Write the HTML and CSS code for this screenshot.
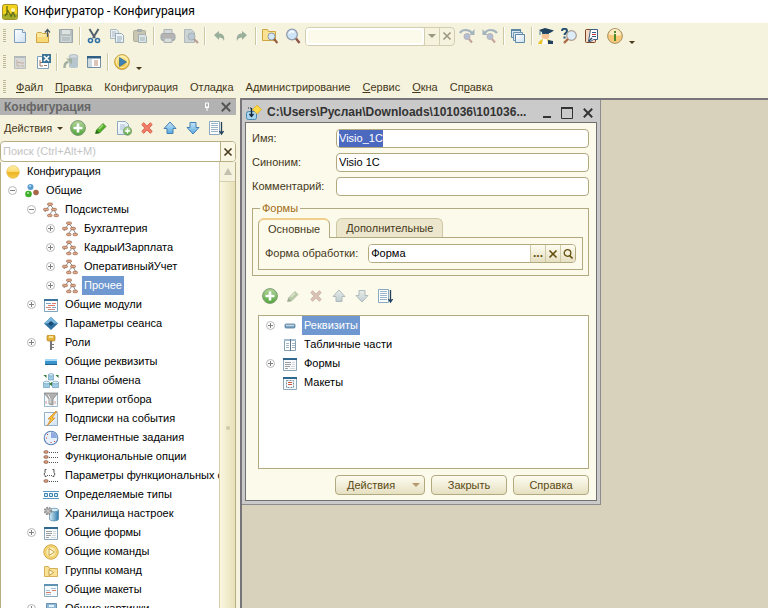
FILE: index.html
```html
<!DOCTYPE html>
<html lang="ru">
<head>
    <meta charset="UTF-8">
    <meta name="viewport" content="width=device-width, initial-scale=1.0">
    <title>Конфигуратор - Конфигурация</title>
    <link rel="stylesheet" href="styles.css">
</head>
<body>
    <!-- icon set -->
    <svg class="sprite" width="0" height="0" aria-hidden="true">
        <defs>
            <linearGradient id="gGreen" x1="0" y1="0" x2="0" y2="1"><stop offset="0" stop-color="#b4d69c"/><stop offset="1" stop-color="#4fa53a"/></linearGradient>
            <linearGradient id="gGold" x1="0" y1="0" x2="0" y2="1"><stop offset="0" stop-color="#fff3a8"/><stop offset="1" stop-color="#e8b42c"/></linearGradient>
            <linearGradient id="gBall" x1="0" y1="0" x2="0" y2="1"><stop offset="0" stop-color="#fdf0a8"/><stop offset=".45" stop-color="#fbdc70"/><stop offset=".55" stop-color="#eeb222"/><stop offset="1" stop-color="#f7cf4c"/></linearGradient>
            <linearGradient id="gBlue" x1="0" y1="0" x2="0" y2="1"><stop offset="0" stop-color="#c6e6f8"/><stop offset="1" stop-color="#5aa9de"/></linearGradient>
            <linearGradient id="gPage" x1="0" y1="0" x2="1" y2="1"><stop offset="0" stop-color="#ffffff"/><stop offset="1" stop-color="#cfe0ef"/></linearGradient>
            <linearGradient id="gCyl" x1="0" y1="0" x2="1" y2="0"><stop offset="0" stop-color="#d9effa"/><stop offset="1" stop-color="#2d79a8"/></linearGradient>
        </defs>
        <symbol id="i-app" viewBox="0 0 16 16"><rect x=".5" y=".5" width="15" height="15" rx="2" fill="#f3d21d" stroke="#a3912c"/><path d="M1 10h14v3a2 2 0 0 1-2 2H3a2 2 0 0 1-2-2z" fill="#a3ad2a"/><path d="M5 2v9M3 12l3-5 3 5M9 13l2-6 2 6" fill="none" stroke="#5f6d18" stroke-width="1.300"/><circle cx="11" cy="6" r="2" fill="#fff6b0"/></symbol>
        <symbol id="i-new" viewBox="0 0 16 16"><path d="M2.500 1.500h8l3 3v10h-11z" fill="url(#gPage)" stroke="#7d9fbd"/><path d="M10.500 1.500v3h3" fill="#fff" stroke="#7d9fbd"/></symbol>
        <symbol id="i-open" viewBox="0 0 16 16"><path d="M1.500 14.500v-9l1-1h4l1 1h6v9z" fill="#fbe79e" stroke="#d0a545"/><path d="M2 9h11v5H2z" fill="#f8d877"/><path d="M12.500 9V2M10 4.500 12.500 1.500 15 4.500" fill="none" stroke="#4d5a60" stroke-width="1.300"/></symbol>
        <symbol id="i-save" viewBox="0 0 16 16"><path d="M1.500 1.500h13v13h-13z" fill="#b6c0c2" stroke="#9ca7ab"/><path d="M4 2h8v4H4z" fill="#dde2df"/><path d="M3 8h10v6H3z" fill="#d0d7d5"/><path d="M4 10h8M4 12h8" stroke="#a4afb2"/></symbol>
        <symbol id="i-cut" viewBox="0 0 16 16"><path d="M3.500 1l5.500 9M12.500 1L7 10" stroke="#52616d" stroke-width="2" fill="none"/><circle cx="4.500" cy="12.500" r="2" fill="none" stroke="#2e6fa8" stroke-width="1.600"/><circle cx="11.500" cy="12.500" r="2" fill="none" stroke="#2e6fa8" stroke-width="1.600"/></symbol>
        <symbol id="i-copy" viewBox="0 0 16 16"><path d="M1.500 1.500h6l2 2v7h-8z" fill="#e9eff0" stroke="#a9bac4"/><path d="M3 4h4M3 6h4M3 8h3" stroke="#a9bac4"/><path d="M6.500 5.500h6l2 2v7h-8z" fill="#eef4f6" stroke="#95abbb"/><path d="M8 9h5M8 11h5M8 13h4" stroke="#95abbb"/></symbol>
        <symbol id="i-paste" viewBox="0 0 16 16"><rect x="1.500" y="2.500" width="12" height="11" rx="1" fill="#c9c5b0" stroke="#b0ad9a"/><rect x="5" y="1" width="5" height="3" fill="#a5acaa"/><path d="M6.500 6.500h6l2 2v6h-8z" fill="#dfe6e6" stroke="#a2b0b6"/><path d="M8 10h5M8 12h5" stroke="#a2b0b6"/></symbol>
        <symbol id="i-print" viewBox="0 0 16 16"><path d="M4 1.500h8V6H4z" fill="#d5dad9" stroke="#a7b0b2"/><rect x="1" y="5.500" width="14" height="7" rx="2" fill="#b1b7b9" stroke="#a0a7a9"/><path d="M4 10h8v4.500H4z" fill="#d8dcda" stroke="#a7b0b2"/><path d="M3 8h10" stroke="#c9aaa6"/></symbol>
        <symbol id="i-preview" viewBox="0 0 16 16"><path d="M1.500 1.500h7l3 3v10h-10z" fill="#ccd3d3" stroke="#b0b9bb"/><circle cx="8.500" cy="8.500" r="3.500" fill="#b9c8d2" stroke="#a5b0b5"/><path d="M11 11l4 4" stroke="#b59d96" stroke-width="2.200"/></symbol>
        <symbol id="i-undo" viewBox="0 0 16 16"><path d="M3 7l5-4v2.500c4 0 6 2.500 5 7.500-1-3-2.500-3.500-5-3.500V12z" fill="#9aaf9c"/></symbol>
        <symbol id="i-redo" viewBox="0 0 16 16"><path d="M13 7L8 3v2.500C4 5.500 2 8 3 13c1-3 2.500-3.500 5-3.500V12z" fill="#9aaf9c"/></symbol>
        <symbol id="i-findfiles" viewBox="0 0 16 16"><path d="M.5 12.500v-11h5l1 2h7v9z" fill="#fae293" stroke="#cfa542"/><circle cx="9.500" cy="8.500" r="3.500" fill="#d3e8f8" stroke="#8b9aa8"/><path d="M12 11l3.500 4" stroke="#94583c" stroke-width="2"/></symbol>
        <symbol id="i-find" viewBox="0 0 16 16"><circle cx="7" cy="6.500" r="5.300" fill="#cfe4f7" stroke="#909dac" stroke-width="1.300"/><path d="M4 5.500a3 3 0 0 1 5-1" fill="none" stroke="#fff" stroke-width="1.400"/><path d="M11 10.500l3.500 4.500" stroke="#8f5546" stroke-width="2.400"/></symbol>
        <symbol id="i-findnext" viewBox="0 0 16 16"><path d="M1 5c2-4 9-4 12 0" fill="none" stroke="#a3b4bd" stroke-width="2.200"/><path d="M15.500 1v6h-5z" fill="#a3b4bd"/><circle cx="8" cy="8.500" r="3" fill="#b5bdd0" stroke="#b5b5bf"/><path d="M10 11l3 3.500" stroke="#c2a293" stroke-width="2"/></symbol>
        <symbol id="i-findprev" viewBox="0 0 16 16"><path d="M15 5C12 1 5 1 3 5" fill="none" stroke="#a3b4bd" stroke-width="2.200"/><path d="M.5 1v6h5z" fill="#a3b4bd"/><circle cx="8" cy="8.500" r="3" fill="#b5bdd0" stroke="#b5b5bf"/><path d="M10 11l3 3.500" stroke="#c2a293" stroke-width="2"/></symbol>
        <symbol id="i-windows" viewBox="0 0 16 16"><path d="M1.500 1.500h9v8h-9z" fill="#dce8f1" stroke="#5c87a5"/><path d="M1 1h10v2H1z" fill="#5c87a5"/><path d="M3.500 4.500h9v8h-9z" fill="#dce8f1" stroke="#6f97b2"/><path d="M5.500 6.500h9v8h-9z" fill="url(#gPage)" stroke="#5d88a6"/></symbol>
        <symbol id="i-student" viewBox="0 0 16 16"><path d="M0 16c1-3 3-5 7-5s7 2 8 5z" fill="#e8c52a"/><path d="M10 12l5 1v3h-5z" fill="#20425e"/><path d="M5 11l-1 5h6l-1-5z" fill="#fff"/><circle cx="7.500" cy="7.500" r="3.800" fill="#f5c396"/><path d="M4 4h7v2H4z" fill="#2c5878"/><path d="M1 2l6-2 9 2.500-4 2.500H5z" fill="#20425e"/><path d="M2 3v4" stroke="#4b8198"/></symbol>
        <symbol id="i-helpfind" viewBox="0 0 16 16"><path d="M1 3c0-3 5-3 5 0 0 2-2.500 2-2.500 4" fill="none" stroke="#26506f" stroke-width="2"/><path d="M2.500 8.500h2v2h-2z" fill="#26506f"/><circle cx="10.500" cy="7.500" r="4.800" fill="#dcecf8" stroke="#ab9a90" stroke-width="1.200"/><path d="M7 11l-4 4" stroke="#a96b48" stroke-width="2.400"/></symbol>
        <symbol id="i-syntax" viewBox="0 0 16 16"><rect x="1.500" y="1.500" width="10" height="13" rx="1" fill="#f6d9c4" stroke="#7a4526"/><path d="M6.500 1.500h7v10h-4l-3 2H4.500z" fill="#fff" stroke="#3a5d80"/><path d="M8 4.500h4M8 8.500h4" stroke="#345f88"/><path d="M8 6.500h4" stroke="#c33"/><path d="M5 13l3-3" stroke="#244b70" stroke-width="1.500"/></symbol>
        <symbol id="i-info" viewBox="0 0 16 16"><circle cx="8" cy="8" r="7.400" fill="#f7c877" stroke="#a5926a"/><path d="M2 7a6 6 0 0 1 12 0c-4 2-8-1-12 0z" fill="#fdebc6"/><path d="M7 3h2v2H7zM7 6h2v7H7z" fill="#4c8a2a"/></symbol>
        <symbol id="i-conf" viewBox="0 0 16 16"><path d="M2.500 2.500h11v12h-11z" fill="#d6d9d5" stroke="#b7bebc"/><path d="M2 2h12v2H2z" fill="#b1babb"/><path d="M5 6v6h3M5 8.500h3M8 9h4M9 12h3" fill="none" stroke="#c9aea3"/></symbol>
        <symbol id="i-confclose" viewBox="0 0 16 16"><path d="M2.500 2.500h11v12h-11z" fill="#fff" stroke="#7da0bb"/><path d="M5 6v6h3M5 8.500h2M9 11.500h3" fill="none" stroke="#9c7563"/><path d="M7 0h9v9H7z" fill="#3b7396"/><path d="M9 2l5 5M14 2L9 7" stroke="#fff" stroke-width="1.600"/></symbol>
        <symbol id="i-dbupd" viewBox="0 0 16 16"><path d="M6 2.500v10c0 2 9 2 9 0v-10z" fill="#b7c5cd"/><ellipse cx="10.500" cy="2.500" rx="4.500" ry="2" fill="#ced8dd" stroke="#b0bdc5"/><path d="M1.500 14c0-4 1-6 4-6" fill="none" stroke="#a3b1a0" stroke-width="2.400"/><path d="M3 4.500h6v6z" fill="#a3b1a0"/></symbol>
        <symbol id="i-panes" viewBox="0 0 16 16"><path d="M1.500 2.500h13v11h-13z" fill="#fff" stroke="#6f8da2"/><path d="M1 2h14v2.500H1z" fill="#2f5f82"/><path d="M2 5h4v8H2z" fill="#cdd9e0"/><path d="M8 7h4M8 9h4M8 11h4" stroke="#b98a72"/></symbol>
        <symbol id="i-run" viewBox="0 0 16 16"><circle cx="8" cy="8" r="7.400" fill="url(#gGold)" stroke="#c39d3d"/><circle cx="8" cy="8" r="5.500" fill="none" stroke="#fff2b6"/><path d="M5.500 3.500l7 4.500-7 4.500z" fill="#3d83b5" stroke="#225f8f" stroke-width=".6"/></symbol>
        <symbol id="i-add" viewBox="0 0 16 16"><circle cx="8" cy="8" r="7.400" fill="url(#gGreen)" stroke="#7c9a70"/><path d="M8 3.500v9M3.500 8h9" stroke="#fff" stroke-width="2.600"/></symbol>
        <symbol id="i-edit" viewBox="0 0 16 16"><path d="M2.500 13.500l1-3.500 6.500-6.500 3 3L6.500 13z" fill="#4fae26" stroke="#357f1a" stroke-width=".7"/><path d="M3.500 10L6.500 13l-4 .5z" fill="#2b6a1c"/><path d="M6 9l4-4" stroke="#a9e080" stroke-width="1.200"/></symbol>
        <symbol id="i-addcopy" viewBox="0 0 16 16"><path d="M1.500 1.500h8l3 3v10h-11z" fill="url(#gPage)" stroke="#8ea8bd"/><path d="M4 5h5M4 7h5M4 9h3" stroke="#a7bfd2"/><circle cx="11.500" cy="11" r="4.200" fill="url(#gGreen)" stroke="#7c9a70" stroke-width=".8"/><path d="M11.500 8.500v5M9 11h5" stroke="#fff" stroke-width="1.500"/></symbol>
        <symbol id="i-del" viewBox="0 0 16 16"><path d="M3.500 3.500l9 9M12.500 3.500l-9 9" stroke="#d25440" stroke-width="3.200"/><path d="M3.500 3.500l9 9M12.500 3.500l-9 9" stroke="#f3806a" stroke-width="1.800"/></symbol>
        <symbol id="i-up" viewBox="0 0 16 16"><path d="M8 2l6 6.500h-3V13.500H5V8.500H2z" fill="url(#gBlue)" stroke="#4580b3"/></symbol>
        <symbol id="i-down" viewBox="0 0 16 16"><path d="M8 14L2 7.500h3V2.500h6v5h3z" fill="url(#gBlue)" stroke="#4580b3"/></symbol>
        <symbol id="i-sort" viewBox="0 0 16 16"><path d="M1.500 1.500h10v13h-10z" fill="#fff" stroke="#8aa8c0"/><path d="M3 3.500h7M3 5.500h7M3 7.500h7M3 9.500h7M3 11.500h7" stroke="#9db5c8"/><path d="M13.500 2v12M11.500 11l2 3 2-3" fill="none" stroke="#20405c" stroke-width="1.300"/></symbol>
        <symbol id="i-root" viewBox="0 0 16 16"><circle cx="8" cy="8" r="6.300" fill="url(#gBall)" stroke="#e3b545" stroke-width=".6"/></symbol>
        <symbol id="i-common" viewBox="0 0 16 16"><circle cx="6.500" cy="4" r="3" fill="#5a9ccc"/><circle cx="4.500" cy="11" r="3.300" fill="#3fae2a"/><circle cx="12" cy="9.500" r="2.800" fill="#a8694a"/><circle cx="6" cy="3" r="1" fill="#b9dcf3"/><circle cx="4" cy="10" r="1" fill="#b8eba5"/></symbol>
        <symbol id="i-subsys" viewBox="0 0 16 16"><path d="M7 3L3 7.500 2 10M7 3l4 4-5 6M11 8l3 5" fill="none" stroke="#87919a"/><g fill="#e0ab8c" stroke="#9c6549" stroke-width=".7"><rect x="4.500" y="1" width="5" height="2.400" rx="1.200"/><rect x=".5" y="6.300" width="5" height="2.400" rx="1.200"/><rect x="8.500" y="6.300" width="5" height="2.400" rx="1.200"/><rect x="4.500" y="12.300" width="4.500" height="2.400" rx="1.200"/><rect x="11" y="12.300" width="4.500" height="2.400" rx="1.200"/></g></symbol>
        <symbol id="i-module" viewBox="0 0 16 16"><path d="M1.500 2.500h13v12h-13z" fill="#fff" stroke="#7da3bf"/><path d="M1 2h14v2H1z" fill="#39759e"/><path d="M3 6.500h5M9 10.500h4" stroke="#7fa5c0"/><path d="M5 8.500h7M9 6.500h4" stroke="#de7a67"/><path d="M3 10.500h5M5 12.500h7" stroke="#c98880"/></symbol>
        <symbol id="i-param" viewBox="0 0 16 16"><path d="M8 1l7 6.500L8 14 1 7.500z" fill="#2f6f9f"/><path d="M8 1l7 6.500H1z" fill="#78b4dc"/><path d="M8 5l3 2.500L8 10 5 7.500z" fill="#174a74"/></symbol>
        <symbol id="i-role" viewBox="0 0 16 16"><rect x="4" y="0" width="8" height="6" rx="1.500" fill="#e5b23a" stroke="#a67a1d" stroke-width=".7"/><path d="M6 2h4" stroke="#fff1b8" stroke-width="1.500"/><path d="M7 6h2v9H7z" fill="#77777a"/><path d="M9 9h2v1H9zM9 12h2v1H9z" fill="#77777a"/></symbol>
        <symbol id="i-attr" viewBox="0 0 16 16"><rect x="2" y="5" width="12" height="6" fill="#3a93cc"/><path d="M2 5h12v2H2z" fill="#a6daf6"/><path d="M2 10.500h12" stroke="#1f6394"/></symbol>
        <symbol id="i-plan" viewBox="0 0 16 16"><g fill="#9fcbe4" stroke="#6d9dbb" stroke-width=".7"><path d="M5.500 1.500v5.500h5V1.500zM.5 9.500v5h6v-5zM9.500 9.500v5h6v-5z"/></g><g fill="#e2f2fa" stroke="#6d9dbb" stroke-width=".7"><ellipse cx="8" cy="1.800" rx="2.500" ry="1.200"/><ellipse cx="3.500" cy="9.500" rx="3" ry="1.300"/><ellipse cx="12.500" cy="9.500" rx="3" ry="1.300"/></g><path d="M.5 2h3v3zM15.500 2h-3l3 3zM6 11l3-2v4z" fill="#2b7a2e"/></symbol>
        <symbol id="i-filter" viewBox="0 0 16 16"><path d="M1.500 1.500h13v13h-13z" fill="#f5f9fc" stroke="#9db9cd"/><path d="M1 1h14l-5 6v6l-4-1V7z" fill="#b0b0b0" stroke="#858585" stroke-width=".8"/><path d="M5 2.500l2 4v5" fill="none" stroke="#eee"/><path d="M3 9v3M12 9v3" stroke="#d39c9c"/></symbol>
        <symbol id="i-event" viewBox="0 0 16 16"><path d="M1.500 1.500h13v13h-13z" fill="url(#gPage)" stroke="#93b0c6"/><path d="M13 0L5 8h3l-4 7 8-8H9l5-7z" fill="#f9c52e" stroke="#d58b32" stroke-width=".8"/></symbol>
        <symbol id="i-clock" viewBox="0 0 16 16"><circle cx="8" cy="8" r="6.800" fill="#e6effa" stroke="#5f84b6" stroke-width="1.100"/><path d="M8 8V2a6 6 0 0 1 6 6z" fill="#8fabe0"/><path d="M3 8h1M8 12v1M4 4l1 1M12 12l-1-1" stroke="#d2483b"/></symbol>
        <symbol id="i-funcopt" viewBox="0 0 16 16"><g fill="#e0ab8c" stroke="#8a5338" stroke-width=".8"><rect x="1" y="1.800" width="4" height="2.400" rx="1"/><rect x="1" y="6.800" width="4" height="2.400" rx="1"/><rect x="1" y="11.800" width="4" height="2.400" rx="1"/></g><path d="M6 3.500h9M6 8.500h9M6 13.500h9" stroke="#555" stroke-dasharray="1 1"/></symbol>
        <symbol id="i-funcpar" viewBox="0 0 16 16"><path d="M3.500 1.500H2v3L1 6l1 1.500v1h1.500M9.500 1.500H11v3l1 1.500-1 1.500v1H9.500" fill="none" stroke="#555"/><path d="M4 7.500h5M6 13.500h9" stroke="#555" stroke-dasharray="1 1"/><rect x="1" y="11.800" width="4" height="2.400" rx="1" fill="#e0ab8c" stroke="#8a5338" stroke-width=".8"/></symbol>
        <symbol id="i-types" viewBox="0 0 16 16"><path d="M0 4.500h16M0 11.500h16" stroke="#5597c1"/><g fill="#d4ebf8" stroke="#3a83b3"><path d="M1.500 6.500h3v3h-3zM6.500 6.500h3v3h-3zM11.500 6.500h3v3h-3z"/></g></symbol>
        <symbol id="i-storage" viewBox="0 0 16 16"><path d="M6.500 4v9c0 2.500 9 2.500 9 0V4z" fill="url(#gCyl)" stroke="#39759e" stroke-width=".6"/><ellipse cx="11" cy="4" rx="4.500" ry="1.800" fill="#d7eef9" stroke="#39759e" stroke-width=".6"/><circle cx="5" cy="5" r="3.200" fill="#c9c9c9" stroke="#8a8a8a" stroke-width="2" stroke-dasharray="1.600 1"/><circle cx="5" cy="5" r="1.300" fill="#fff" stroke="#777" stroke-width=".7"/></symbol>
        <symbol id="i-form" viewBox="0 0 16 16"><path d="M1.500 2.500h13v12h-13z" fill="#f8fafb" stroke="#8ca7b9"/><path d="M1 2h14v2H1z" fill="#2f678e"/><path d="M3 6.500h6M3 8.500h6M3 10.500h5M3 12.500h3" stroke="#9a9ea1"/><path d="M10 6.500h3M10 8.500h3M9 10.500h4M8 12.500h5" stroke="#d3d8da"/></symbol>
        <symbol id="i-cmd" viewBox="0 0 16 16"><circle cx="8" cy="8" r="7.200" fill="#f9dc7c" stroke="#cfa540"/><circle cx="8" cy="8" r="5.300" fill="#fcecae" stroke="#dfb94f" stroke-width=".7"/><path d="M6 4.500l5.500 3.500L6 11.500z" fill="#fffbe2" stroke="#bd9030" stroke-width=".8"/></symbol>
        <symbol id="i-cmdgroup" viewBox="0 0 16 16"><path d="M1.500 13.500v-10h4l1 2h8v8z" fill="#f9e296" stroke="#d6b058"/><path d="M6 6.500l4.500 3-4.500 3z" fill="#fffbe2" stroke="#b98a24" stroke-width=".8"/></symbol>
        <symbol id="i-layout" viewBox="0 0 16 16"><path d="M1.500 2.500h13v12h-13z" fill="#f4f9fc" stroke="#8ca7b9"/><path d="M1 2h14v2H1z" fill="#5f91b3"/><path d="M8 6.500h5M3 12.500h5M3 8.500h4" stroke="#a3c1d5"/><path d="M3 10.500h5M9 8.500h4" stroke="#de7a67"/></symbol>
        <symbol id="i-pict" viewBox="0 0 16 16"><path d="M3.500 2.500h10v12h-10z" fill="#8fb8d8" stroke="#6690b0"/><path d="M6 4h5v2H6z" fill="#e5f1f9"/></symbol>
        <symbol id="i-epf" viewBox="0 0 16 16"><rect x=".5" y="6.500" width="10" height="8" rx="2" fill="#a9d4ee" stroke="#4486ad"/><path d="M5.500 3v8M3.500 9l2 2.500 2-2.500" fill="none" stroke="#16283a" stroke-width="1.400"/><path d="M2 3h4" stroke="#16283a" stroke-dasharray="1 1"/><path d="M11 0l4.500 4.500L11 9 6.500 4.500z" fill="#ffd84a" stroke="#d9a521" stroke-width=".7"/></symbol>
        <symbol id="i-attrsm" viewBox="0 0 16 16"><rect x="3" y="6" width="10" height="4" rx="1" fill="#7ea6c2" stroke="#4c7899" stroke-width=".8"/><path d="M4 7.300h8" stroke="#d5e6f1"/></symbol>
        <symbol id="i-tabpart" viewBox="0 0 16 16"><path d="M2.500 2.500h11v11h-11z" fill="#fff" stroke="#86a0b4"/><path d="M2 2h12v2H2z" fill="#a4bccf"/><path d="M8.500 2v12" stroke="#5c7890"/><path d="M4 6.500h3M4 8.500h3M4 10.500h3M10 6.500h3M10 8.500h3M10 10.500h3" stroke="#a3b6c5"/></symbol>
        <symbol id="i-maket" viewBox="0 0 16 16"><path d="M1.500 2.500h13v12h-13z" fill="#f8fbfd" stroke="#8ca7b9"/><path d="M1 2h14v2H1z" fill="#2f678e"/><path d="M4.500 5.500h7v7h-7z" fill="none" stroke="#7b8e9b" stroke-dasharray="2 1"/><path d="M6 7.500h4M6 9.500h4" stroke="#d2543d"/></symbol>
        <symbol id="i-plus" viewBox="0 0 9 9"><circle cx="4.500" cy="4.500" r="4" fill="#fff" stroke="#b8b8b8"/><path d="M4.500 2v5M2 4.500h5" stroke="#808080"/></symbol>
        <symbol id="i-minus" viewBox="0 0 9 9"><circle cx="4.500" cy="4.500" r="4" fill="#fff" stroke="#b8b8b8"/><path d="M2 4.500h5" stroke="#808080"/></symbol>
        <symbol id="i-x" viewBox="0 0 10 10"><path d="M1.500 1.500l7 7M8.500 1.500l-7 7" stroke="currentColor" stroke-width="1.600"/></symbol>
        <symbol id="i-lens" viewBox="0 0 10 10"><circle cx="4.500" cy="4" r="3.300" fill="none" stroke="currentColor" stroke-width="1.300"/><path d="M6.500 6.500l3 3" stroke="currentColor" stroke-width="1.600"/></symbol>
        <symbol id="i-pin" viewBox="0 0 10 10"><path d="M3.500 1h3v4h-3zM3 5.500h4M5 6v3" fill="none" stroke="#fff"/></symbol>
        <symbol id="i-max" viewBox="0 0 12 12"><path d="M.5 1.500h11v10H.5z" fill="none" stroke="#333"/><path d="M0 1h12" stroke="#333" stroke-width="2"/></symbol>
        <symbol id="i-min" viewBox="0 0 10 10"><path d="M1 9h8" stroke="#333" stroke-width="2"/></symbol>
    </svg>

    <header class="titlebar">
        <svg class="icon"><use href="#i-app"/></svg>
        <h1>Конфигуратор - Конфигурация</h1>
    </header>

    <div class="bars">
        <div class="toolbar">
            <span class="grip"></span>
            <button title="Новый"><svg class="icon"><use href="#i-new"/></svg></button>
            <button title="Открыть"><svg class="icon"><use href="#i-open"/></svg></button>
            <button title="Сохранить"><svg class="icon"><use href="#i-save"/></svg></button>
            <span class="sep"></span>
            <button title="Вырезать"><svg class="icon"><use href="#i-cut"/></svg></button>
            <button title="Копировать"><svg class="icon"><use href="#i-copy"/></svg></button>
            <button title="Вставить"><svg class="icon"><use href="#i-paste"/></svg></button>
            <span class="sep"></span>
            <button title="Печать"><svg class="icon"><use href="#i-print"/></svg></button>
            <button title="Просмотр"><svg class="icon"><use href="#i-preview"/></svg></button>
            <span class="sep"></span>
            <button title="Отменить"><svg class="icon"><use href="#i-undo"/></svg></button>
            <button title="Повторить"><svg class="icon"><use href="#i-redo"/></svg></button>
            <span class="sep"></span>
            <button title="Глобальный поиск"><svg class="icon"><use href="#i-findfiles"/></svg></button>
            <button title="Найти"><svg class="icon"><use href="#i-find"/></svg></button>
            <div class="combo">
                <input type="text" aria-label="Строка поиска">
                <button title="Список"><span class="caret"></span></button>
                <button title="Очистить"><svg class="small"><use href="#i-x"/></svg></button>
            </div>
            <button title="Найти следующий"><svg class="icon"><use href="#i-findnext"/></svg></button>
            <button title="Найти предыдущий"><svg class="icon"><use href="#i-findprev"/></svg></button>
            <span class="sep"></span>
            <button title="Окна"><svg class="icon"><use href="#i-windows"/></svg></button>
            <span class="sep"></span>
            <button title="Обучение"><svg class="icon"><use href="#i-student"/></svg></button>
            <button title="Поиск в справке"><svg class="icon"><use href="#i-helpfind"/></svg></button>
            <button title="Синтакс-помощник"><svg class="icon"><use href="#i-syntax"/></svg></button>
            <button title="О программе"><svg class="icon"><use href="#i-info"/></svg></button>
            <button class="more" title="Ещё"><span class="caret"></span></button>
        </div>
        <div class="toolbar">
            <span class="grip"></span>
            <button title="Открыть конфигурацию"><svg class="icon"><use href="#i-conf"/></svg></button>
            <button title="Закрыть конфигурацию"><svg class="icon"><use href="#i-confclose"/></svg></button>
            <span class="sep"></span>
            <button title="Обновить базу данных"><svg class="icon"><use href="#i-dbupd"/></svg></button>
            <button title="Окно конфигурации"><svg class="icon"><use href="#i-panes"/></svg></button>
            <span class="sep"></span>
            <button title="Начать отладку"><svg class="icon"><use href="#i-run"/></svg></button>
            <button class="more" title="Ещё"><span class="caret"></span></button>
        </div>
        <nav class="menu">
            <span class="grip"></span>
            <button><u>Ф</u>айл</button>
            <button><u>П</u>равка</button>
            <button>Конфигурация</button>
            <button>Отладка</button>
            <button>Администрирование</button>
            <button><u>С</u>ервис</button>
            <button><u>О</u>кна</button>
            <button>Сп<u>р</u>авка</button>
        </nav>
    </div>

    <main class="work">
        <aside class="panel">
            <div class="panel-head">
                <h2>Конфигурация</h2>
                <button title="Закрепить"><svg class="small"><use href="#i-pin"/></svg></button>
                <button title="Закрыть"><svg class="icon-close"><use href="#i-x"/></svg></button>
            </div>
            <div class="panel-tools">
                <button class="actions">Действия <span class="caret"></span></button>
                <button title="Добавить"><svg class="icon"><use href="#i-add"/></svg></button>
                <button title="Изменить"><svg class="icon"><use href="#i-edit"/></svg></button>
                <button title="Скопировать"><svg class="icon"><use href="#i-addcopy"/></svg></button>
                <button title="Удалить"><svg class="icon"><use href="#i-del"/></svg></button>
                <button title="Вверх"><svg class="icon"><use href="#i-up"/></svg></button>
                <button title="Вниз"><svg class="icon"><use href="#i-down"/></svg></button>
                <button title="Упорядочить"><svg class="icon"><use href="#i-sort"/></svg></button>
            </div>
            <div class="search">
                <input type="text" placeholder="Поиск (Ctrl+Alt+M)" aria-label="Поиск">
                <button title="Очистить"><svg class="small"><use href="#i-x"/></svg></button>
            </div>
            <div class="tree-box">
                <ul class="tree">
                    <li><div class="row root"><svg class="icon"><use href="#i-root"/></svg><span>Конфигурация</span></div></li>
                    <li>
                        <div class="row"><svg class="exp"><use href="#i-minus"/></svg><svg class="icon"><use href="#i-common"/></svg><span>Общие</span></div>
                        <ul>
                            <li>
                                <div class="row"><svg class="exp"><use href="#i-minus"/></svg><svg class="icon"><use href="#i-subsys"/></svg><span>Подсистемы</span></div>
                                <ul>
                                    <li><div class="row"><svg class="exp"><use href="#i-plus"/></svg><svg class="icon"><use href="#i-subsys"/></svg><span>Бухгалтерия</span></div></li>
                                    <li><div class="row"><svg class="exp"><use href="#i-plus"/></svg><svg class="icon"><use href="#i-subsys"/></svg><span>КадрыИЗарплата</span></div></li>
                                    <li><div class="row"><svg class="exp"><use href="#i-plus"/></svg><svg class="icon"><use href="#i-subsys"/></svg><span>ОперативныйУчет</span></div></li>
                                    <li><div class="row selected"><svg class="exp"><use href="#i-plus"/></svg><svg class="icon"><use href="#i-subsys"/></svg><span>Прочее</span></div></li>
                                </ul>
                            </li>
                            <li><div class="row"><svg class="exp"><use href="#i-plus"/></svg><svg class="icon"><use href="#i-module"/></svg><span>Общие модули</span></div></li>
                            <li><div class="row"><svg class="exp"></svg><svg class="icon"><use href="#i-param"/></svg><span>Параметры сеанса</span></div></li>
                            <li><div class="row"><svg class="exp"><use href="#i-plus"/></svg><svg class="icon"><use href="#i-role"/></svg><span>Роли</span></div></li>
                            <li><div class="row"><svg class="exp"></svg><svg class="icon"><use href="#i-attr"/></svg><span>Общие реквизиты</span></div></li>
                            <li><div class="row"><svg class="exp"></svg><svg class="icon"><use href="#i-plan"/></svg><span>Планы обмена</span></div></li>
                            <li><div class="row"><svg class="exp"></svg><svg class="icon"><use href="#i-filter"/></svg><span>Критерии отбора</span></div></li>
                            <li><div class="row"><svg class="exp"></svg><svg class="icon"><use href="#i-event"/></svg><span>Подписки на события</span></div></li>
                            <li><div class="row"><svg class="exp"></svg><svg class="icon"><use href="#i-clock"/></svg><span>Регламентные задания</span></div></li>
                            <li><div class="row"><svg class="exp"></svg><svg class="icon"><use href="#i-funcopt"/></svg><span>Функциональные опции</span></div></li>
                            <li><div class="row"><svg class="exp"></svg><svg class="icon"><use href="#i-funcpar"/></svg><span>Параметры функциональных опций</span></div></li>
                            <li><div class="row"><svg class="exp"></svg><svg class="icon"><use href="#i-types"/></svg><span>Определяемые типы</span></div></li>
                            <li><div class="row"><svg class="exp"></svg><svg class="icon"><use href="#i-storage"/></svg><span>Хранилища настроек</span></div></li>
                            <li><div class="row"><svg class="exp"><use href="#i-plus"/></svg><svg class="icon"><use href="#i-form"/></svg><span>Общие формы</span></div></li>
                            <li><div class="row"><svg class="exp"></svg><svg class="icon"><use href="#i-cmd"/></svg><span>Общие команды</span></div></li>
                            <li><div class="row"><svg class="exp"></svg><svg class="icon"><use href="#i-cmdgroup"/></svg><span>Группы команд</span></div></li>
                            <li><div class="row"><svg class="exp"></svg><svg class="icon"><use href="#i-layout"/></svg><span>Общие макеты</span></div></li>
                            <li><div class="row"><svg class="exp"><use href="#i-plus"/></svg><svg class="icon"><use href="#i-pict"/></svg><span>Общие картинки</span></div></li>
                        </ul>
                    </li>
                </ul>
                <div class="scroll">
                    <div class="scroll-up"><span></span></div>
                    <div class="scroll-thumb"><span></span></div>
                </div>
            </div>
        </aside>

        <section class="desk">
            <div class="dialog">
                <div class="dialog-head">
                    <svg class="icon"><use href="#i-epf"/></svg>
                    <h2>C:\Users\Руслан\Downloads\101036\101036...</h2>
                    <button title="Свернуть"><svg class="small"><use href="#i-min"/></svg></button>
                    <button title="Развернуть"><svg class="icon-close"><use href="#i-max"/></svg></button>
                    <button title="Закрыть"><svg class="icon-close"><use href="#i-x"/></svg></button>
                </div>
                <form class="dialog-body" onsubmit="return false">
                    <div class="field">
                        <label for="name">Имя:</label>
                        <input type="text" id="name" value="Visio_1C">
                    </div>
                    <div class="field">
                        <label for="synonym">Синоним:</label>
                        <input type="text" id="synonym" value="Visio 1C">
                    </div>
                    <div class="field">
                        <label for="comment">Комментарий:</label>
                        <input type="text" id="comment">
                    </div>

                    <fieldset>
                        <legend>Формы</legend>
                        <div class="tabs">
                            <button type="button" class="active">Основные</button>
                            <button type="button">Дополнительные</button>
                        </div>
                        <div class="pane">
                            <label for="form">Форма обработки:</label>
                            <div class="picker">
                                <input type="text" id="form" value="Форма">
                                <button type="button" class="dots">...</button>
                                <button type="button" title="Очистить"><svg class="small"><use href="#i-x"/></svg></button>
                                <button type="button" title="Открыть"><svg class="small"><use href="#i-lens"/></svg></button>
                            </div>
                        </div>
                    </fieldset>

                    <div class="form-tools">
                        <button type="button" title="Добавить"><svg class="icon"><use href="#i-add"/></svg></button>
                        <button type="button" title="Изменить" disabled><svg class="icon"><use href="#i-edit"/></svg></button>
                        <button type="button" title="Удалить" disabled><svg class="icon"><use href="#i-del"/></svg></button>
                        <button type="button" title="Вверх" disabled><svg class="icon"><use href="#i-up"/></svg></button>
                        <button type="button" title="Вниз" disabled><svg class="icon"><use href="#i-down"/></svg></button>
                        <button type="button" title="Упорядочить"><svg class="icon"><use href="#i-sort"/></svg></button>
                    </div>

                    <ul class="tree list">
                        <li><div class="row selected"><svg class="exp"><use href="#i-plus"/></svg><svg class="icon"><use href="#i-attrsm"/></svg><span>Реквизиты</span></div></li>
                        <li><div class="row"><svg class="exp"></svg><svg class="icon"><use href="#i-tabpart"/></svg><span>Табличные части</span></div></li>
                        <li><div class="row"><svg class="exp"><use href="#i-plus"/></svg><svg class="icon"><use href="#i-form"/></svg><span>Формы</span></div></li>
                        <li><div class="row"><svg class="exp"></svg><svg class="icon"><use href="#i-maket"/></svg><span>Макеты</span></div></li>
                    </ul>

                    <div class="buttons">
                        <button type="button" class="drop">Действия <span class="caret"></span></button>
                        <button type="button">Закрыть</button>
                        <button type="button">Справка</button>
                    </div>
                </form>
            </div>
        </section>
    </main>

    <script>
        document.getElementById('name').select();
    </script>
</body>
</html>
```

FILE: styles.css
```css
* {
    box-sizing: border-box;
}
body {
    margin: 0;
    height: 100vh;
    display: flex;
    flex-direction: column;
    overflow: hidden;
    background-color: #f5f2dd;
    color: #45391a;
    font-family: "Liberation Sans", Arial, sans-serif;
    font-size: 11px;
    line-height: 19px;
}
button {
    display: flex;
    align-items: center;
    justify-content: center;
    padding: 0;
    border: 0;
    background: none;
    color: inherit;
    font: inherit;
}
input {
    min-width: 0;
    color: #000;
    font: inherit;
    outline: none;
}
h1, h2, ul {
    margin: 0;
    padding: 0;
}
svg {
    display: block;
    flex: none;
}
.sprite {
    position: absolute;
}
.icon {
    width: 16px;
    height: 16px;
}
.small {
    width: 10px;
    height: 10px;
}
.icon-close {
    width: 12px;
    height: 12px;
}
.caret {
    border: 3px solid transparent;
    border-top-color: currentColor;
    border-bottom: 0;
}

/* window title */
.titlebar {
    display: flex;
    align-items: center;
    gap: 6px;
    height: 23px;
    padding-left: 2px;
    background-color: #fff;
}
.titlebar h1 {
    color: #000;
    font-family: Roboto, "Open Sans", sans-serif;
    font-size: 12px;
    font-weight: normal;
}

/* toolbars and menu */
.toolbar {
    display: flex;
    align-items: center;
    gap: 7px;
    height: 26px;
    padding-left: 3px;
}
.grip {
    width: 3px;
    height: 14px;
    background: repeating-linear-gradient(#bdb898 0 1px, transparent 1px 2px);
}
.toolbar .grip {
    margin-right: -1px;
}
.sep {
    width: 2px;
    height: 18px;
    margin: 0 -2px;
    border-left: 1px solid #cdc8a4;
    border-right: 1px solid #fff;
}
.more {
    align-self: flex-end;
    margin: 0 0 3px -1px;
    height: 7px;
}
.combo {
    display: flex;
    width: 150px;
    height: 19px;
    margin: 0 -3px;
    border: 1px solid #d3ceb2;
    border-radius: 4px;
    color: #9c9881;
}
.combo input {
    flex: 1;
    border: 2px solid #fff;
    border-radius: 3px;
    background-color: #fcfaeb;
}
.combo button {
    width: 15px;
    border-left: 1px solid #d3ceb2;
}
.combo .caret {
    border-width: 4px 4px 0;
}
.menu {
    display: flex;
    align-items: center;
    gap: 12px;
    height: 23px;
    padding: 1px 0 0 3px;
}
.menu .grip {
    margin-right: -2px;
}
.menu button {
    display: block;
}

/* configuration panel */
.work {
    flex: 1;
    display: flex;
    gap: 4px;
    min-height: 0;
}
.panel {
    width: 236px;
    display: flex;
    flex-direction: column;
    min-height: 0;
    border-top: 1px solid #a09d8c;
}
.panel-head {
    display: flex;
    align-items: center;
    gap: 8px;
    height: 16px;
    padding: 0 4px;
    background-color: #b2b2b2;
}
.panel-head h2 {
    flex: 1;
    color: #666;
    font-size: 12px;
}
.panel-head button {
    color: #555;
}
.panel-tools {
    display: flex;
    align-items: center;
    gap: 7px;
    height: 26px;
    padding-left: 4px;
}
.actions {
    gap: 4px;
    width: 59px;
    justify-content: space-between;
}
.search {
    display: flex;
    height: 21px;
    border: 1px solid #b8ae84;
    border-radius: 4px;
    background-color: #fff;
}
.search input {
    flex: 1;
    padding: 0 2px;
    border: 0;
    background: none;
}
.search input::placeholder {
    color: #c4c4c4;
}
.search button {
    width: 15px;
    border-left: 1px solid #b8ae84;
    background-color: #faf7e4;
    border-radius: 0 3px 3px 0;
}
.tree-box {
    flex: 1;
    display: flex;
    min-height: 0;
    overflow: hidden;
    border: 1px solid #b8ae84;
    border-width: 0 1px;
    background-color: #fff;
}
.tree {
    flex: 1;
    overflow: hidden;
    list-style: none;
    color: #000;
}
.tree ul {
    padding-left: 19px;
    list-style: none;
}
.row {
    display: flex;
    align-items: center;
    height: 19px;
    padding-left: 7px;
    white-space: nowrap;
}
.row.root {
    padding-left: 4px;
}
.row .exp {
    width: 9px;
    height: 9px;
    margin-right: 7px;
}
.row span {
    margin-left: 4px;
    padding: 0 2px;
}
.row.selected span {
    background-color: #7098d0;
    color: #fff;
}
.scroll {
    width: 16px;
    display: flex;
    flex-direction: column;
    border-left: 1px solid #d5cfae;
}
.scroll-up {
    display: flex;
    align-items: center;
    justify-content: center;
    height: 20px;
    border-bottom: 1px solid #d5cfae;
    background-color: #f5f2dd;
}
.scroll-up span {
    border: 4px solid transparent;
    border-top: 0;
    border-bottom: 7px solid #c3c0ae;
}
.scroll-thumb {
    flex: 1;
    display: flex;
    align-items: center;
    justify-content: center;
    padding-top: 65px;
    background: linear-gradient(90deg, #faf7e0, #e8e0b8);
}
.scroll-thumb span {
    width: 4px;
    height: 4px;
    border-radius: 2px;
    background-color: #cfc9aa;
}

/* MDI area */
.desk {
    flex: 1;
    display: flex;
    align-items: flex-start;
    border: 2px solid #77757a;
    border-width: 2px 0 0 2px;
    background-color: #d8d2bd;
}
.dialog {
    width: 359px;
    padding: 1px 3px 3px;
    border: 1px solid #8d8d90;
    border-width: 0 1px 1px 0;
    background-color: #cacaca;
}
.dialog-head {
    display: flex;
    align-items: center;
    height: 21px;
    padding: 2px 3px 0 1px;
    color: #333;
}
.dialog-head h2 {
    flex: 1;
    margin-left: 5px;
    white-space: nowrap;
    font-size: 12px;
}
.dialog-head button {
    margin-left: 9px;
}
.dialog-body {
    padding: 6px 7px 5px 6px;
    border: 1px solid #707070;
    background-color: #fcfaeb;
}
.field {
    display: flex;
    margin-bottom: 5px;
}
.field label {
    width: 84px;
}
.field input {
    flex: 1;
    height: 19px;
    padding: 0 2px;
    border: 1px solid #b3a97f;
    border-radius: 4px;
    background-color: #fff;
}
#name::selection {
    background-color: #4c69c0;
    color: #fff;
}
fieldset {
    margin: 0;
    padding: 0 5px 5px;
    border: 1px solid #b3a97f;
}
legend {
    margin-left: 2px;
    padding: 0 2px;
    line-height: 14px;
    color: #a06c14;
}
.tabs {
    display: flex;
    gap: 6px;
    padding-top: 3px;
}
.tabs button {
    height: 19px;
    padding: 0 9px;
    border: 1px solid #cfc8a6;
    border-bottom: 0;
    border-radius: 6px 6px 0 0;
    background-color: #ece6cd;
}
.tabs .active {
    height: 20px;
    margin-bottom: -1px;
    z-index: 1;
    border-color: #b3a97f;
    border-top: 2px solid #efcf8a;
    background-color: #fcfaeb;
}
.pane {
    display: flex;
    gap: 10px;
    padding: 6px;
    border: 1px solid #b3a97f;
}
.picker {
    flex: 1;
    display: flex;
    height: 19px;
    border: 1px solid #b3a97f;
    border-radius: 4px;
    overflow: hidden;
    background-color: #fff;
    color: #65500f;
}
.picker input {
    flex: 1;
    padding: 0 2px;
    border: 0;
}
.picker button {
    width: 15px;
    border-left: 1px solid #cfc8a6;
    background: linear-gradient(#fdfcf0, #e6e0c2);
}
.picker .dots {
    font-size: 12px;
    font-weight: bold;
}
.form-tools {
    display: flex;
    gap: 7px;
    padding: 12px 10px 11px;
}
.form-tools button:disabled {
    filter: grayscale(60%);
    opacity: 0.5;
}
.tree.list {
    height: 154px;
    margin-left: 6px;
    border: 1px solid #b3a97f;
    background-color: #fff;
}
.buttons {
    display: flex;
    justify-content: flex-end;
    gap: 6px;
    margin-top: 6px;
}
.buttons button {
    width: 76px;
    height: 20px;
    border: 1px solid #b3a97f;
    border-radius: 4px;
    background: linear-gradient(#fdfcf0, #e6e0c2);
    color: #5a4a14;
}
.buttons .drop {
    width: 90px;
    justify-content: space-between;
    padding: 0 4px 0 11px;
}
.buttons .caret {
    border-width: 4px 4px 0;
    color: #b49a6e;
}
```
